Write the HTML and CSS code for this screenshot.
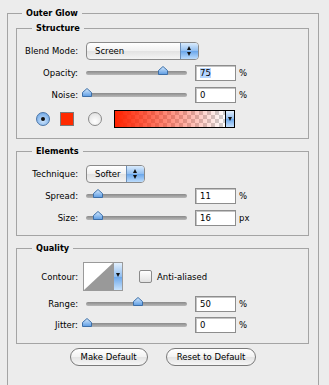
FILE: index.html
```html
<!DOCTYPE html>
<html lang="en">
<head>
    <meta charset="UTF-8">
    <meta name="viewport" content="width=device-width, initial-scale=1.0">
    <title>Outer Glow</title>
    <link rel="stylesheet" href="styles.css">
</head>
<body>
    <fieldset class="group outer">
        <legend>Outer Glow</legend>

        <!-- Structure -->
        <fieldset class="group inner structure">
            <legend>Structure</legend>
            <div class="row">
                <span class="label">Blend Mode:</span>
                <div class="popup wide"><span>Screen</span><i class="stepper"></i></div>
            </div>
            <div class="row">
                <span class="label">Opacity:</span>
                <div class="slider"><div class="thumb" style="left: 75%"></div></div>
                <div class="field"><span class="sel">75</span></div>
                <span class="unit">%</span>
            </div>
            <div class="row">
                <span class="label">Noise:</span>
                <div class="slider"><div class="thumb" style="left: 0%"></div></div>
                <div class="field">0</div>
                <span class="unit">%</span>
            </div>
            <div class="row colors">
                <span class="radio on"></span>
                <span class="swatch"></span>
                <span class="radio"></span>
                <div class="gradient"><span class="ramp"></span><i class="drop"></i></div>
            </div>
        </fieldset>

        <!-- Elements -->
        <fieldset class="group inner elements">
            <legend>Elements</legend>
            <div class="row">
                <span class="label">Technique:</span>
                <div class="popup short"><span>Softer</span><i class="stepper"></i></div>
            </div>
            <div class="row">
                <span class="label">Spread:</span>
                <div class="slider"><div class="thumb" style="left: 11%"></div></div>
                <div class="field">11</div>
                <span class="unit">%</span>
            </div>
            <div class="row">
                <span class="label">Size:</span>
                <div class="slider"><div class="thumb" style="left: 11%"></div></div>
                <div class="field">16</div>
                <span class="unit">px</span>
            </div>
        </fieldset>

        <!-- Quality -->
        <fieldset class="group inner quality">
            <legend>Quality</legend>
            <div class="row contour-row">
                <span class="label">Contour:</span>
                <div class="contour">
                    <svg width="29" height="27" viewBox="0 0 29 27"><rect width="29" height="27" fill="#fff"/><polygon points="0,27 29,0 29,27" fill="#999"/></svg>
                    <i class="drop"></i>
                </div>
                <span class="check"></span>
                <span class="check-label">Anti-aliased</span>
            </div>
            <div class="row">
                <span class="label">Range:</span>
                <div class="slider"><div class="thumb" style="left: 50%"></div></div>
                <div class="field">50</div>
                <span class="unit">%</span>
            </div>
            <div class="row">
                <span class="label">Jitter:</span>
                <div class="slider"><div class="thumb" style="left: 0%"></div></div>
                <div class="field">0</div>
                <span class="unit">%</span>
            </div>
        </fieldset>

        <div class="buttons">
            <button>Make Default</button>
            <button>Reset to Default</button>
        </div>
    </fieldset>
</body>
</html>
```

FILE: styles.css
```css
body {
    margin: 0;
    padding: 0;
    background-color: #ececec;
    font-family: "DejaVu Sans", sans-serif;
    font-size: 8.5px;
    color: #000;
    overflow: hidden;
}
.group {
    border: 1px solid #a4a4a4;
    padding: 0;
    min-width: 0;
}
.group legend {
    font-weight: bold;
    font-size: 8.2px;
    line-height: 12px;
    padding: 0 4px;
}
.outer {
    margin: 7px 10px 0 7px;
    padding-bottom: 20px;
}
.outer > legend {
    margin-left: 14px;
}
.inner {
    margin: 0 9px 0 8px;
    display: flex;
    flex-direction: column;
}
.inner legend {
    margin-left: 15px;
}
.structure {
    margin-top: 3px;
    padding: 8px 0 10px;
    gap: 5px;
}
.elements {
    margin-top: 6px;
    padding: 8px 0 9px;
    gap: 5px;
}
.quality {
    margin-top: 6px;
    padding: 8px 0 10px;
    gap: 4px;
}
.row {
    display: flex;
    align-items: center;
    height: 17px;
}
.label {
    width: 61px;
    text-align: right;
    margin-right: 8px;
}

/* popup menus */
.popup {
    height: 16px;
    display: flex;
    align-items: center;
    border: 1px solid #8a8a8a;
    border-radius: 4px;
    background: linear-gradient(#ffffff, #f1f1f1 50%, #e2e2e2 51%, #f4f4f4);
    overflow: hidden;
}
.popup span {
    flex: 1;
    padding-left: 8px;
}
.popup.wide { width: 111px; }
.popup.short { width: 57px; }
.stepper {
    width: 17px;
    height: 16px;
    border-left: 1px solid #6d8fb8;
    background: linear-gradient(#d9ebfd, #8fbdf0 50%, #6aa6ea 51%, #bcdcfc);
    position: relative;
}
.stepper::before,
.stepper::after {
    content: "";
    position: absolute;
    left: 6px;
    border-left: 2.5px solid transparent;
    border-right: 2.5px solid transparent;
}
.stepper::before {
    top: 3px;
    border-bottom: 4px solid #111;
}
.stepper::after {
    bottom: 3px;
    border-top: 4px solid #111;
}

/* sliders */
.slider {
    width: 101px;
    height: 4px;
    border-radius: 2px;
    background: linear-gradient(#8a8a8a, #b8b8b8);
    position: relative;
    margin-right: 8px;
}
.thumb {
    position: absolute;
    top: -5px;
    width: 10px;
    height: 9px;
    margin-left: -4px;
    background: url("data:image/svg+xml;utf8,<svg xmlns='http://www.w3.org/2000/svg' width='10' height='9'><defs><linearGradient id='g' x1='0' y1='0' x2='0' y2='1'><stop offset='0' stop-color='%23d6ebff'/><stop offset='1' stop-color='%235c9be2'/></linearGradient></defs><path d='M0.5 4.5 L5 0.5 L9.5 4.5 V8.5 H0.5 Z' fill='url(%23g)' stroke='%233d6fa8'/></svg>") no-repeat;
}
.field {
    height: 14px;
    line-height: 14px;
    border: 1px solid #8d8d8d;
    box-shadow: inset 1px 1px 0 #c4c4c4;
    background: #fff;
    padding-left: 4px;
    box-sizing: content-box;
    width: 35px;
}
.sel {
    background: #b5d5ff;
}
.unit {
    margin-left: 3px;
}

/* color row */
.colors {
    height: 18px;
    margin-top: 2px;
}
.radio {
    width: 12px;
    height: 12px;
    border-radius: 50%;
    border: 1px solid #8a8a8a;
    background: radial-gradient(circle at 50% 70%, #ffffff, #dcdcdc);
    position: relative;
}
.radio.on {
    margin-left: 19px;
    border-color: #4a75a8;
    background: radial-gradient(circle at 50% 65%, #cde4fc, #5f9de2);
}
.radio.on::after {
    content: "";
    position: absolute;
    left: 4px;
    top: 4px;
    width: 4px;
    height: 4px;
    border-radius: 50%;
    background: #111;
}
.radio:not(.on) {
    margin-left: 14px;
}
.swatch {
    width: 12px;
    height: 12px;
    margin-left: 10px;
    border: 1px solid #7a7a7a;
    background: #ff2a00;
}
.gradient {
    margin-left: 12px;
    height: 16px;
    display: flex;
    border: 1px solid #000;
}
.ramp {
    width: 110px;
    height: 16px;
    background:
        linear-gradient(to right, rgba(255, 34, 0, 1), rgba(255, 34, 0, 0)),
        repeating-conic-gradient(#cfcfcf 0 25%, #ffffff 0 50%) 0 0 / 8px 8px;
}
.drop {
    width: 8px;
    height: 16px;
    border-left: 1px solid #000;
    background: linear-gradient(#e3f0fd, #8fbdf0 50%, #6aa6ea 51%, #c8e2fc);
    position: relative;
}
.drop::after {
    content: "";
    position: absolute;
    left: 2px;
    top: 6px;
    border-left: 2px solid transparent;
    border-right: 2px solid transparent;
    border-top: 4px solid #111;
}

/* quality */
.contour-row {
    height: 29px;
}
.contour-row .label {
    margin-right: 5px;
}
.contour {
    display: flex;
    border: 1px solid #9a9a9a;
    height: 27px;
}
.contour svg {
    display: block;
}
.contour .drop {
    height: 27px;
    border-left: 1px solid #9a9a9a;
}
.contour .drop::after {
    top: 10px;
}
.check {
    width: 11px;
    height: 11px;
    margin-left: 16px;
    border: 1px solid #8a8a8a;
    border-radius: 2px;
    background: linear-gradient(#ffffff, #e2e2e2);
}
.check-label {
    margin-left: 5px;
}

/* buttons */
.buttons {
    display: flex;
    justify-content: center;
    gap: 18px;
    margin-top: 4px;
}
.buttons button {
    font-family: inherit;
    font-size: 8.5px;
    color: #000;
    height: 18px;
    padding: 0 10px;
    border: 1px solid #7a7a7a;
    border-radius: 9px;
    background: linear-gradient(#ffffff, #f2f2f2 50%, #e4e4e4 51%, #f6f6f6);
}
```
